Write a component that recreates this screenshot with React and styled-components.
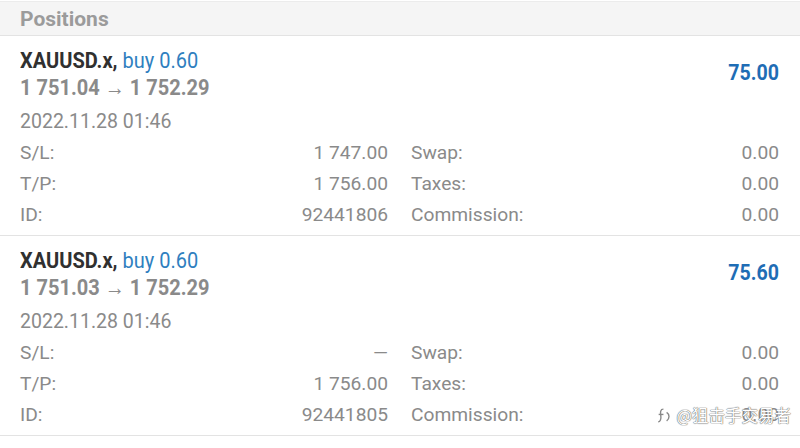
import React from 'react'
import styled, { createGlobalStyle } from 'styled-components'

const GlobalStyle = createGlobalStyle`
  html, body {
    margin: 0;
    padding: 0;
    background: #fff;
  }
  body {
    font-family: Roboto, 'Noto Sans', 'Liberation Sans', sans-serif;
  }
`

const color = {
  title: '#303030',
  blue: '#2f7fbf',
  profit: '#1f6db5',
  grey: '#8a8a8a',
  line: '#e3e3e3',
}

const Page = styled.div`
  position: relative;
  width: 800px;
  height: 448px;
  overflow: hidden;
  background: #fff;
  padding-top: 1px;
  box-sizing: border-box;
`

const Header = styled.div`
  height: 33px;
  display: flex;
  align-items: center;
  padding: 0 20px;
  background: #f5f5f5;
  border-top: 1px solid #ececec;
  border-bottom: 1px solid ${color.line};
  color: #9b9b9b;
  font-size: 21px;
  font-weight: 700;
`

const Item = styled.div`
  padding: 11px 21px 5px 20px;
  border-bottom: 1px solid ${color.line};
`

const Top = styled.div`
  display: flex;
  align-items: center;
  justify-content: space-between;
`

// the trade header uses a narrow bold face, squeezed from Roboto
const Line = styled.div`
  font-size: 22.5px;
  line-height: 27px;
  font-weight: 700;
  color: ${(p) => p.$color || color.title};
  white-space: nowrap;
  transform: scaleX(0.89);
  transform-origin: left center;
`

const Side = styled.span`
  font-weight: 400;
  color: ${color.blue};
`

const Profit = styled.div`
  font-size: 22px;
  line-height: 27px;
  font-weight: 700;
  color: ${color.profit};
  margin-bottom: 4px;
  transform: scaleX(0.89);
  transform-origin: right center;
`

const Date = styled.div`
  margin-top: 5px;
  font-size: 19.5px;
  line-height: 31px;
  color: ${color.grey};
`

const Grid = styled.div`
  display: grid;
  grid-template-columns: 1fr 1fr;
  column-gap: 23px;
`

const Cell = styled.div`
  display: flex;
  justify-content: space-between;
  font-size: 19.2px;
  line-height: 31px;
  color: ${color.grey};
`

const Mark = styled.div`
  position: absolute;
  right: 9px;
  top: 403px;
  display: flex;
  align-items: center;
  gap: 4px;
  font-family: 'Noto Sans CJK SC', 'Noto Sans', sans-serif;
  font-size: 16.5px;
  color: #fff;
  text-shadow: 0 0 1px #666, 0 0 1px #777, 0 0 1px #999;
  white-space: nowrap;
`

const positions = [
  {
    symbol: 'XAUUSD.x',
    side: 'buy 0.60',
    open: '1 751.04',
    price: '1 752.29',
    profit: '75.00',
    time: '2022.11.28 01:46',
    sl: '1 747.00',
    tp: '1 756.00',
    id: '92441806',
  },
  {
    symbol: 'XAUUSD.x',
    side: 'buy 0.60',
    open: '1 751.03',
    price: '1 752.29',
    profit: '75.60',
    time: '2022.11.28 01:46',
    sl: '—',
    tp: '1 756.00',
    id: '92441805',
  },
]

const Position = ({ p }) => (
  <Item>
    <Top>
      <div>
        <Line>
          {p.symbol}, <Side>{p.side}</Side>
        </Line>
        <Line $color={color.grey}>
          {p.open} → {p.price}
        </Line>
      </div>
      <Profit>{p.profit}</Profit>
    </Top>
    <Date>{p.time}</Date>
    <Grid>
      <Cell>
        <span>S/L:</span>
        <span>{p.sl}</span>
      </Cell>
      <Cell>
        <span>Swap:</span>
        <span>0.00</span>
      </Cell>
      <Cell>
        <span>T/P:</span>
        <span>{p.tp}</span>
      </Cell>
      <Cell>
        <span>Taxes:</span>
        <span>0.00</span>
      </Cell>
      <Cell>
        <span>ID:</span>
        <span>{p.id}</span>
      </Cell>
      <Cell>
        <span>Commission:</span>
        <span>0.00</span>
      </Cell>
    </Grid>
  </Item>
)

export default () => (
  <Page>
    <GlobalStyle />
    <Header>Positions</Header>
    {positions.map((p) => (
      <Position key={p.id} p={p} />
    ))}
    <Mark>
      <svg width='15' height='17' viewBox='0 0 14 16' fill='none' stroke='#888' strokeWidth='1.3'>
        <path d='M6 2 C3 2 3 5 3.5 8 C4 11 3 14 1 14' />
        <path d='M1.5 7 H6' />
        <path d='M9 5 C12 7 12 11 9 13' />
      </svg>
      <span>@狙击手交易者</span>
    </Mark>
  </Page>
)
